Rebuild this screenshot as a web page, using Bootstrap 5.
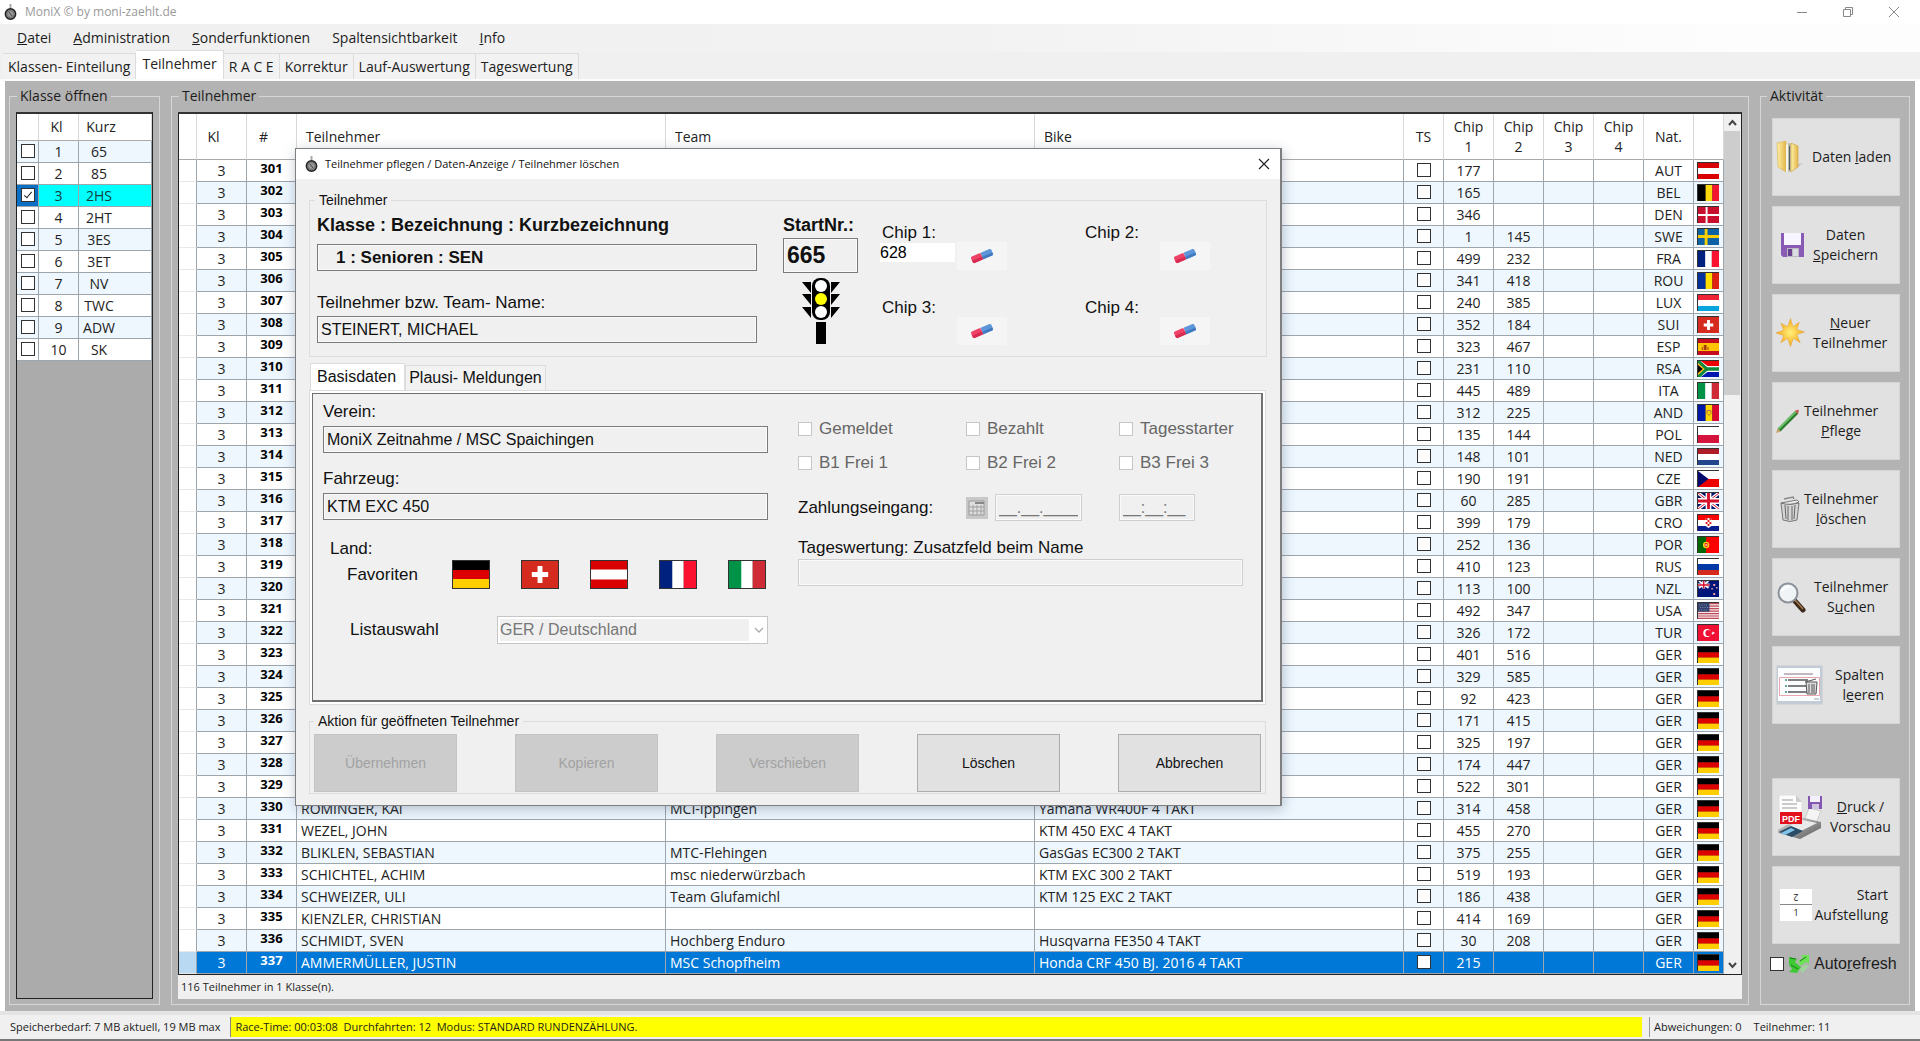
<!DOCTYPE html>
<html lang="de">
<head>
<meta charset="utf-8">
<meta name="viewport" content="width=device-width, initial-scale=1">
<title>MoniX © by moni-zaehlt.de</title>
<link href="https://cdn.jsdelivr.net/npm/bootstrap@5.3.0/dist/css/bootstrap.min.css" rel="stylesheet">
<style>
:root{--ui:"Open Sans","Noto Sans",sans-serif;--form:"Liberation Sans",Arial,sans-serif}
body{font-family:var(--ui);font-size:14px;line-height:20px;color:#1c1c1c;background:#fff}
button,input,select{font-family:inherit}
a{color:inherit;text-decoration:none}
.app{min-height:100vh}
.titlebar{height:24px;color:#999;font-size:12px;padding:0 19px 0 4px}
.capgroup{gap:32px}
.capbtn{border:0;background:none;padding:0;width:14px;height:14px;line-height:0;color:#888}
.menubar{height:28px;background:linear-gradient(90deg,#f0f0f0 0,#f2f2f2 50%,#fdfdfd 90%);padding-left:17px;gap:22px}
.tabstrip{height:29px;background:#f0f0f0;padding-left:3px;border-bottom:2px solid #fbfbfb}
.tabstrip .tabitem{height:26px;padding:0 5px;border:1px solid #dcdcdc;border-left:0;border-bottom:0;background:#f2f2f2;line-height:26px;color:#222}
.tabstrip .tabitem.active{height:29px;background:#fff;line-height:26px;padding:0 6px}
.workarea{background:#b3b3b3;padding:5px 5px 6px 4px;margin:0 5px;gap:11px}
.grp{border:1px solid #d6d6d6;padding:6px 6px 5px;margin:0;min-width:0}
.grp legend{float:none;width:auto;margin:0 0 0 1px;padding:0 3px;font-size:14px;line-height:20px}
.side-l{width:151px;flex:none}.side-r{width:150px;flex:none;padding:12px 9px 5px 11px}
.grp.side-r legend{margin-left:-5px}
.gridbox{border:1px solid #222;border-top:2px solid #333;background:#fff;overflow:hidden}
.classbox{background:#ababab;width:137px}
.dt{border-collapse:separate;border-spacing:0;table-layout:fixed;width:100%;margin:0;font-size:14px;line-height:20px;color:#222}
.dt th,.dt td{border:solid #9da5ad;border-width:0 1px 1px 0;padding:0;height:22px;text-align:center;font-weight:400;white-space:nowrap;overflow:hidden;line-height:20px}
.dt th{border-color:#d9d9d9;border-bottom-color:#a9a9a9;height:46px;background:#fff;white-space:normal}
.dt td{background:#fff}
.dt tr:nth-child(even) td{background:#eef7fe}
.dt td.rh,.dt tr:nth-child(even) td.rh{background:#fff;border-bottom-color:#e8e8e8}
.dt .lft{text-align:left;padding-left:4px}
.dt th.lft{padding-left:9px}
.dt .nr{padding-right:16px}
.dt td.num{font-weight:700;font-size:13px;color:#000;line-height:17px;padding-bottom:4px}
.dt tr.sel td{background:#0078d7!important;color:#fff}
.dt tr.sel td.rh{background:#b9d9f3!important}
.dt.klassen th{height:27px}
.dt.klassen tr:nth-child(odd) td{background:#eef7fe}
.dt.klassen tr:nth-child(even) td{background:#fff}
.dt.klassen tr.act td{background:#0ff;color:#163c3c}
.dt.klassen tr.act td:first-child{background:#0b6fc4}
.dt.klassen td:last-child{padding-right:32px}
.dt.klassen th:last-child{padding-right:28px}
.cb{appearance:none;width:14px;height:14px;border:1px solid #333;background:#fff;margin:0;display:block;position:relative;flex:none}
td .cb{margin:0 auto 2px}
.cb:checked::after{content:"";position:absolute;left:4px;top:1px;width:4px;height:8px;border:solid #222;border-width:0 1px 1px 0;transform:rotate(40deg)}
.flagsm{width:22px;height:17px;display:block;margin:0 0 1px 3px}
.scroll{width:17px;background:#f0f0f0;flex:none}
.scroll button{border:0;background:none;height:17px;width:17px;padding:0;line-height:0}
.scroll .thumb{background:#cdcdcd;height:264px;width:16px}
.infoline{background:#f0f0f0;height:24px;padding:4px 3px;font-size:11px;line-height:16px}
.actbtn{display:flex;align-items:center;width:100%;height:78px;border:1px solid #d4d4d4;background:#e1e1e1;padding:0 3px;margin-bottom:10px;font-size:14px;line-height:20px;color:#1c1c1c;text-align:center}
.actbtn svg{flex:none}
.gapabove{margin-top:44px}
.autoref{margin:10px 0 0 -2px}
.autoref label{font:16px/20px var(--form)}
.status{height:30px;background:#f0f0f0;border-bottom:2px solid #777;border-top:4px solid #e4e4e4;font-size:11px;padding-left:10px;gap:10px;line-height:20px}
.race{background:#ff0;border-left:1px solid #888;padding-left:4px;height:20px}
.counts{width:271px;border-left:1px solid #999;padding-left:4px;margin-left:-3px}
/* dialog window */
.dlg{position:absolute;left:295px;top:148px;width:987px;background:#f0f0f0;border:1px solid #7f7f7f;border-right-width:2px;box-shadow:1px 3px 12px rgba(40,60,90,.3);font-family:var(--form);font-size:17px;line-height:20px;color:#111}
.dlgtitle{height:30px;background:#fff;font:11px/20px var(--ui);padding:0 9px;gap:7px;color:#111}
.dlgbody{padding:11px 13px}
.dlg fieldset{border:1px solid #dcdcdc;margin:0;min-width:0}
.dlg legend{float:none;width:auto;font-size:14px;line-height:20px;margin:0 0 0 -2px;padding:0 4px}
.fs1{padding:0 7px 11px}
.dlg label{display:block}
.fld{display:block;width:100%;height:27px;border:1px solid #7a7a7a;background:#f0f0f0;box-shadow:inset 0 0 0 1px #fafafa;padding:0 3px;font-size:16px;color:#111;border-radius:0}
.fld.dim{border-color:#cfcfcf;color:#777}
.colA{width:440px}.colB{width:75px;margin-left:26px}.colC{margin-left:22px;padding-top:13px;display:grid;grid-template-columns:203px 130px;row-gap:28px;align-content:start}
.gap5{margin-top:5px}
.headlbl{font-size:18px;font-weight:700;white-space:nowrap}
.boldfld{margin-top:9px;padding-left:18px;font-size:17px;font-weight:700}
.namelbl{margin-top:22px}
.namefld{margin-top:3px}
.bignr{height:35px;font-size:23px;font-weight:700;margin-top:3px}
.chip label{padding-left:2px}
.chip input{width:75px;height:19px;border:0;padding:0;background:transparent;font-size:16px}
.chip input.on{background:#fff}
.chip button{width:50px;height:28px;border:0;background:#f5f5f5;padding:0;margin:-1px 0 0 2px;line-height:0}
.ftabs{margin-top:6px;height:27px;margin-left:1px}
.ftabs button{border:1px solid #dcdcdc;border-bottom:0;background:#f2f2f2;padding:0 3px;height:25px;font-size:16px;line-height:22px;color:#111}
.ftabs button.active{background:#fff;height:27px;padding:0 8px 0 6px}
.pageframe{border:1px solid #dcdcdc;background:#fff;padding:2px;margin-right:1px}
.page{border:1px solid #707070;border-right-width:2px;border-bottom-width:2px;background:#f0f0f0;padding:8px 18px 56px 10px;display:grid;grid-template-columns:445px 1fr;column-gap:30px}
.favrow{padding-top:1px}
.selrow{padding-top:27px}
.flags{gap:31px}.flags button{width:38px;height:29px;border:0;padding:0;line-height:0;background:none}
.fav{width:129px;padding-left:24px}
.land{padding:19px 0 0 7px}
.lst{width:174px;padding-left:27px}
.selwrap{position:relative;flex:1;height:28px;border:1px solid #c6c6c6;background:#fff;padding:2px 18px 2px 2px}
.selwrap select{appearance:none;width:100%;height:22px;border:0;background:#f0f0f0;color:#777;font-size:16px;padding:0;opacity:1}
.selwrap svg{position:absolute;right:3px;top:10px}
.opts{display:grid;grid-template-columns:168px 153px 1fr;row-gap:14px;padding-top:17px;color:#666}
.opts .cb{border-color:#c6c6c6}
.opt{display:flex;align-items:center;gap:7px}
.pay{display:grid;grid-template-columns:168px 153px 1fr;padding-top:21px;align-items:center}
.paydate{width:87px;margin-left:7px}.paytime{width:76px}
.zuslbl{margin:17px 0 1px}
.dlg .fs2{padding:3px 4px 1px;margin-top:6px;margin-right:1px}
.dlg .fs2 legend{margin-left:0}
.cmd{width:143px;height:58px;border:1px solid #adadad;background:#e1e1e1;font-size:14px;color:#111;padding:0}
.cmd:disabled{background:#ccc;border-color:#c4c4c4;color:#a2a2a2}
</style>
<script src="https://cdn.jsdelivr.net/npm/bootstrap@5.3.0/dist/js/bootstrap.bundle.min.js"></script>
</head>
<body>
<svg width="0" height="0" class="position-absolute" aria-hidden="true">
<defs>
<symbol id="AUT" viewBox="0 0 22 16" preserveAspectRatio="none"><path fill="#d80000" d="M0 0h22v16H0z"/><path fill="#fff" d="M0 5h22v6H0z"/></symbol>
<symbol id="BEL" viewBox="0 0 22 16" preserveAspectRatio="none"><path d="M0 0h8v16H0z"/><path fill="#ffd90c" d="M8 0h7v16H8z"/><path fill="#f31830" d="M15 0h7v16h-7z"/></symbol>
<symbol id="DEN" viewBox="0 0 22 16" preserveAspectRatio="none"><path fill="#c8102e" d="M0 0h22v16H0z"/><path fill="#fff" d="M8 0h2v16H8zM0 7h22v2H0z"/></symbol>
<symbol id="SWE" viewBox="0 0 22 16" preserveAspectRatio="none"><path fill="#0b62a4" d="M0 0h22v16H0z"/><path fill="#f7cf00" d="M7 0h3v16H7zM0 6h22v3H0z"/></symbol>
<symbol id="FRA" viewBox="0 0 22 16" preserveAspectRatio="none"><path fill="#00217e" d="M0 0h8v16H0z"/><path fill="#fff" d="M7.500 0h7v16h-7z"/><path fill="#fb1230" d="M14.500 0H22v16h-7.500z"/></symbol>
<symbol id="ROU" viewBox="0 0 22 16" preserveAspectRatio="none"><path fill="#00319c" d="M0 0h8v16H0z"/><path fill="#ffde00" d="M8 0h7v16H8z"/><path fill="#de2110" d="M15 0h7v16h-7z"/></symbol>
<symbol id="LUX" viewBox="0 0 22 16" preserveAspectRatio="none"><path fill="#fff" d="M0 0h22v16H0z"/><path fill="#ee2436" d="M0 0h22v5H0z"/><path fill="#08a4de" d="M0 11h22v5H0z"/></symbol>
<symbol id="SUI" viewBox="0 0 22 16" preserveAspectRatio="none"><path fill="#d52b1e" d="M0 0h22v16H0z"/><path fill="#fff" d="M9.500 3h3v3.500H16v3h-3.500V13h-3V9.500H6v-3h3.500z"/></symbol>
<symbol id="ESP" viewBox="0 0 22 16" preserveAspectRatio="none"><path fill="#c60b1e" d="M0 0h22v16H0z"/><path fill="#ffc400" d="M0 4h22v8H0z"/><path fill="#a33a10" d="M4 8h1v3H4zM6 6h3v5H6zM10 8h1v3h-1z"/></symbol>
<symbol id="RSA" viewBox="0 0 22 16" preserveAspectRatio="none"><path fill="#fff" d="M0 0h22v16H0z"/><path fill="#e00" d="M3 0h19v5H10z"/><path fill="#0018b0" d="M3 16h19v-5H10z"/><path fill="none" stroke="#108a3c" stroke-width="3.500" d="M0 0l9 8-9 8M9 8h13"/><path fill="#fcb514" d="M0 2l7 6-7 6z"/><path d="M0 4l5 4-5 4z"/></symbol>
<symbol id="ITA" viewBox="0 0 22 16" preserveAspectRatio="none"><path fill="#009246" d="M0 0h8v16H0z"/><path fill="#fff" d="M7.500 0h7v16h-7z"/><path fill="#ce2b37" d="M14.500 0H22v16h-7.500z"/></symbol>
<symbol id="AND" viewBox="0 0 22 16" preserveAspectRatio="none"><path fill="#0018a8" d="M0 0h8v16H0z"/><path fill="#ffd500" d="M8 0h7v16H8z"/><path fill="#d8082e" d="M15 0h7v16h-7z"/><path fill="none" stroke="#b2713b" d="M9.500 5.500h4v3l-2 2-2-2z"/></symbol>
<symbol id="POL" viewBox="0 0 22 16" preserveAspectRatio="none"><path fill="#fff" d="M0 0h22v16H0z"/><path fill="#d4143c" d="M0 8h22v8H0z"/></symbol>
<symbol id="NED" viewBox="0 0 22 16" preserveAspectRatio="none"><path fill="#fff" d="M0 0h22v16H0z"/><path fill="#ae1c28" d="M0 0h22v5H0z"/><path fill="#21468b" d="M0 11h22v5H0z"/></symbol>
<symbol id="CZE" viewBox="0 0 22 16" preserveAspectRatio="none"><path fill="#fff" d="M0 0h22v16H0z"/><path fill="#e00" d="M0 8h22v8H0z"/><path fill="#00096b" d="M0 0l11 8-11 8z"/></symbol>
<symbol id="GBR" viewBox="0 0 22 16" preserveAspectRatio="none"><path fill="#00136b" d="M0 0h22v16H0z"/><path stroke="#fff" stroke-width="3.400" d="M0 0l22 16M22 0L0 16"/><path stroke="#d4102c" d="M0 0l22 16M22 0L0 16"/><path fill="#fff" d="M8 0h6v16H8zM0 5h22v6H0z"/><path fill="#d4102c" d="M9.500 0h3v16h-3zM0 6.500h22v3H0z"/></symbol>
<symbol id="CRO" viewBox="0 0 22 16" preserveAspectRatio="none"><path fill="#fff" d="M0 0h22v16H0z"/><path fill="#f00" d="M0 0h22v5H0z"/><path fill="#0a1d8f" d="M0 11h22v5H0z"/><path fill="#fff" d="M8 3h6v8l-3 2-3-2z"/><path fill="#e02020" d="M8 3h2v2H8zM12 3h2v2h-2zM10 5h2v2h-2zM8 7h2v2H8zM12 7h2v2h-2zM10 9h2v2h-2z"/></symbol>
<symbol id="POR" viewBox="0 0 22 16" preserveAspectRatio="none"><path fill="#f00" d="M0 0h22v16H0z"/><path fill="#060" d="M0 0h8.500v16H0z"/><circle cx="8.500" cy="8" r="3.300" fill="#f7d417"/><path fill="#e22" d="M7 6h3v3l-1.500 1.500L7 9z"/><path fill="#fff" d="M8 7h1v2H8z"/></symbol>
<symbol id="RUS" viewBox="0 0 22 16" preserveAspectRatio="none"><path fill="#fff" d="M0 0h22v16H0z"/><path fill="#0039a6" d="M0 5h22v6H0z"/><path fill="#d52b1e" d="M0 11h22v5H0z"/></symbol>
<symbol id="NZL" viewBox="0 0 22 16" preserveAspectRatio="none"><path fill="#00157a" d="M0 0h22v16H0z"/><path stroke="#fff" stroke-width="1.600" d="M1 0l10 7M11 0L1 7"/><path fill="#fff" d="M4.500 0h3v7.500h-3zM0 2.500h12v3H0z"/><path fill="#d4102c" d="M5.300 0h1.500v7.500H5.300zM0 3.200h12v1.500H0z"/><path fill="#f3a3a3" d="M16 3h2v2h-2zM14 7h1.500v1.500H14zM19 6h1.500v1.500H19zM16 12h2v2h-2z"/></symbol>
<symbol id="USA" viewBox="0 0 22 16" preserveAspectRatio="none"><path fill="#f3e9ea" d="M0 0h22v16H0z"/><path stroke="#c04a58" stroke-width="1.200" d="M0 .6h22M0 3.100h22M0 5.600h22M0 8.100h22M0 10.600h22M0 13h22M0 15.400h22"/><path fill="#31426f" d="M0 0h12v8.700H0z"/><path stroke="#8793ad" stroke-dasharray="1 1.500" d="M1 2h10M2 4.500h9M1 7h10"/></symbol>
<symbol id="TUR" viewBox="0 0 22 16" preserveAspectRatio="none"><path fill="#f01034" d="M0 0h22v16H0z"/><circle cx="9.500" cy="8" r="4" fill="#fff"/><circle cx="10.800" cy="8" r="3.100" fill="#f01034"/><path fill="#fff" d="M14 8l1.200-.4.300-1.300.8 1 1.200-.2-.7 1 .5 1-1.200-.3-.9.900z"/></symbol>
<symbol id="GER" viewBox="0 0 22 16" preserveAspectRatio="none"><path d="M0 0h22v5.500H0z"/><path fill="#dc0000" d="M0 5.300h22v5.500H0z"/><path fill="#ffce00" d="M0 10.600h22V16H0z"/></symbol>
<symbol id="watch" viewBox="0 0 13 18"><path d="M6.500 1v4" stroke="#aaa" stroke-width="2"/><circle cx="6.500" cy="11" r="5.200" fill="#777" stroke="#222" stroke-width="1.400"/><circle cx="6.500" cy="11" r="2.800" fill="#999"/><path d="M5 9l3 4" stroke="#444"/></symbol>
<symbol id="eraser" viewBox="0 0 24 18"><g transform="rotate(-23 12 9)"><rect x="1" y="5.500" width="11" height="7" rx="1.500" fill="#ee4266"/><path d="M1 9.500h11v3H2z" fill="#d82b52"/><path d="M12 5.500h9.500q1.500 0 1.500 1.500v4q0 1.500-1.500 1.500H12z" fill="#5d97da"/><path d="M12 9.800h11q0 2.700-1.500 2.700H12z" fill="#4179c0"/></g></symbol>
<linearGradient id="gold" x1="0" x2="1"><stop stop-color="#fff0a8"/><stop offset="1" stop-color="#e3b64a"/></linearGradient>
<radialGradient id="sun"><stop stop-color="#fff27a"/><stop offset="1" stop-color="#f6a51c"/></radialGradient>
<linearGradient id="prn" x1="0" y1="0" x2="1" y2="1"><stop stop-color="#ddd"/><stop offset="1" stop-color="#555"/></linearGradient>
</defs>
</svg>

<div class="app d-flex flex-column">
  <header class="titlebar d-flex align-items-center">
    <svg width="13" height="18"><use href="#watch"/></svg>
    <span class="ms-2">MoniX © by moni-zaehlt.de</span>
    <div class="capgroup ms-auto d-flex">
      <button class="capbtn" aria-label="Minimieren"><svg width="12" height="12"><path d="M1 6.500h10" stroke="currentColor"/></svg></button>
      <button class="capbtn" aria-label="Wiederherstellen"><svg width="12" height="12" fill="none" stroke="currentColor"><path d="M1.500 3.500h7v7h-7zM3.500 3V1.500h7v7H9"/></svg></button>
      <button class="capbtn" aria-label="Schließen"><svg width="12" height="12"><path d="M1 1l10 10M11 1L1 11" stroke="currentColor"/></svg></button>
    </div>
  </header>
  <nav class="menubar d-flex align-items-center">
    <a href="#"><u>D</u>atei</a><a href="#"><u>A</u>dministration</a><a href="#"><u>S</u>onderfunktionen</a><a href="#">Spaltensichtbarkeit</a><a href="#"><u>I</u>nfo</a>
  </nav>
  <nav class="tabstrip d-flex align-items-end">
    <a class="tabitem" href="#">Klassen- Einteilung</a><a class="tabitem active" href="#">Teilnehmer</a><a class="tabitem" href="#">R A C E</a><a class="tabitem" href="#">Korrektur</a><a class="tabitem" href="#">Lauf-Auswertung</a><a class="tabitem" href="#">Tageswertung</a>
  </nav>

  <main class="workarea d-flex flex-grow-1">
    <fieldset class="grp side-l d-flex flex-column">
      <legend>Klasse öffnen</legend>
      <div class="gridbox classbox flex-grow-1">
        <table class="dt klassen">
          <colgroup><col style="width:22px"><col style="width:40px"><col></colgroup>
          <thead><tr><th></th><th class="pe-1">Kl</th><th>Kurz</th></tr></thead>
          <tbody id="klassen"></tbody>
        </table>
      </div>
    </fieldset>

    <fieldset class="grp flex-grow-1 d-flex flex-column">
      <legend>Teilnehmer</legend>
      <div class="gridbox d-flex flex-grow-1">
        <div class="flex-grow-1">
          <table class="dt">
            <colgroup><col style="width:18px"><col style="width:50px"><col style="width:50px"><col><col><col><col style="width:40px"><col style="width:50px"><col style="width:50px"><col style="width:50px"><col style="width:50px"><col style="width:50px"><col style="width:30px"></colgroup>
            <thead><tr><th></th><th class="nr">Kl</th><th class="nr">#</th><th class="lft">Teilnehmer</th><th class="lft">Team</th><th class="lft">Bike</th><th>TS</th><th>Chip<br>1</th><th>Chip<br>2</th><th>Chip<br>3</th><th>Chip<br>4</th><th>Nat.</th><th></th></tr></thead>
            <tbody id="fahrer"></tbody>
          </table>
        </div>
        <div class="scroll d-flex flex-column">
          <button aria-label="Nach oben"><svg width="9" height="7" fill="none" stroke="#444" stroke-width="2"><path d="M1 6l3.500-4L8 6"/></svg></button>
          <div class="thumb flex-shrink-0"></div>
          <button class="mt-auto" aria-label="Nach unten"><svg width="9" height="7" fill="none" stroke="#444" stroke-width="2"><path d="M1 1l3.500 4L8 1"/></svg></button>
        </div>
      </div>
      <div class="infoline">116 Teilnehmer in 1 Klasse(n).</div>
    </fieldset>

    <fieldset class="grp side-r d-flex flex-column">
      <legend>Aktivität</legend>
      <button class="actbtn"><svg width="28" height="36" viewBox="0 0 28 36"><path d="M18 31l9-7-7 2z" fill="#aaa" opacity=".6"/><path d="M1 4l9-2v31L2 28z" fill="url(#gold)" stroke="#d9b75c" stroke-width=".7"/><path d="M10 6l3-1v28l-3 0z" fill="#f5f5ef"/><path d="M12 4l4 1v27l-4 1z" fill="#b7b9a0"/><path d="M13.500 7v24" stroke="#57606a"/><path d="M15 4l7 3v21l-7 5z" fill="url(#gold)" stroke="#d0a848" stroke-width=".7"/></svg><span class="ms-2 text-nowrap">Daten <u>l</u>aden</span></button>
      <button class="actbtn"><svg class="ms-1" width="25" height="26" viewBox="0 0 25 26"><path d="M1 1h23v24H3l-2-2z" fill="#8a5bb5"/><path d="M4 1h17v12H4z" fill="#f7f5ff"/><path d="M7 16h12v9H7z" fill="#b9b9c4"/><path d="M8 17h4v7H8z" fill="#6b418f"/><path d="M13 17h5v7h-5z" fill="#dcdce4"/></svg><span class="ms-2">Daten<br><u>S</u>peichern</span></button>
      <button class="actbtn"><svg width="29" height="30" viewBox="0 0 30 30"><path fill="url(#sun)" stroke="#e5a93c" stroke-width=".6" d="M15 0l2.500 8.500L24 4l-2.500 7.500 8 2.500-8 2.500L25 25l-7-4.500L15 29l-3-8.500L5 25l3-7.500L0 15l8-3L5 5l7 3.500z"/></svg><span class="ms-2"><u>N</u>euer<br>Teilnehmer</span></button>
      <button class="actbtn"><svg width="24" height="24" viewBox="0 0 24 24"><path d="M3 21L21 3" stroke="#2a7a2a" stroke-width="4"/><path d="M2.500 20L20 2.500" stroke="#6cc16a" stroke-width="1.800"/><path d="M19 2l3-1.500L23 2l-1.500 3z" fill="#c55"/><path d="M0 24l1.500-4.500 3 3z" fill="#caa36a"/></svg><span class="ms-1">Teilnehmer<br><u>P</u>flege</span></button>
      <button class="actbtn"><svg class="ms-1" width="20" height="26" viewBox="0 0 20 26"><path d="M1 7q9 3 18 0l-2 17q-7 3-14 0z" fill="#d5d5d5" stroke="#777"/><path d="M5 9l1 14M8 10v14M12 10v14M15 9l-1 14" stroke="#666"/><path d="M1 7L17 4l2 2q-9 4-18 1z" fill="#eee" stroke="#777"/><path d="M4 3l9-2 1 2" fill="none" stroke="#888" stroke-width="1.500"/></svg><span class="ms-1">Teilnehmer<br><u>l</u>öschen</span></button>
      <button class="actbtn"><svg width="30" height="32" viewBox="0 0 30 32"><path d="M18 19l9 10" stroke="#3a2a1c" stroke-width="5" stroke-linecap="round"/><path d="M19 19l8 9" stroke="#a2774a" stroke-width="1.600"/><circle cx="12" cy="12" r="9.500" fill="#f1f4f6" stroke="#8b9299" stroke-width="2"/><path d="M6 10q2-5 8-4" fill="none" stroke="#fff" stroke-width="2"/></svg><span class="ms-2">Teilnehmer<br>S<u>u</u>chen</span></button>
      <button class="actbtn"><svg width="47" height="40" viewBox="0 0 47 40"><path d="M.5.500h46v39H.5z" fill="#c3ccd4"/><path d="M2 3h42v33H2z" fill="#fbfcfd"/><path d="M8 9h29" stroke="#8a7482"/><path d="M3.500 12.500h40v18h-40z" fill="none" stroke="#e7a5ae"/><path d="M12 15h20M12 21h18M12 27h20" stroke="#555" stroke-width="1.500"/><path d="M9 14h2v2H9zM9 20h2v2H9zM9 26h2v2H9z" fill="#6a9"/><path d="M30 17h11l-1 12h-9z" fill="#ddd" stroke="#555"/><path d="M33 19v9M36 19v9M38 19v9M29 17l11-3" stroke="#555"/><path d="M38 34h5" stroke="#9ab"/></svg><span class="ms-auto me-2 pe-1 text-end">Spalten<br>l<u>e</u>eren</span></button>
      <button class="actbtn gapabove"><svg width="46" height="46" viewBox="0 0 46 46"><path d="M33 14l12 3-5 12-12-2z" fill="#f4f4f4" stroke="#ccc"/><path d="M2 36l22-13 21 5v6L24 45 2 39z" fill="url(#prn)"/><path d="M22 25l19 4-16 8-12-4z" fill="#e8eaec"/><path d="M3 38l12-6 12 5-11 6z" fill="#2b4c66"/><path d="M5 39l10-5 4 2-10 5z" fill="#7fc4e8"/><path d="M3 1h17l6 7v22H3z" fill="#fcfcfc" stroke="#ddd"/><path d="M20 1v7h6z" fill="#ccc"/><path d="M6 6h11M6 10h15M6 14h15" stroke="#999"/><path d="M4 18h22v12H4z" fill="#e3101e"/><path d="M32 2h14v13H32z" fill="#8257b0"/><path d="M34 2h10v6H34z" fill="#f4f0fb"/><path d="M36 10h7v5h-7z" fill="#cfc4dd"/><text x="15" y="27.500" text-anchor="middle" font-family="Liberation Sans, sans-serif" font-size="9" font-weight="700" fill="#fff">PDF</text></svg><span class="ms-2"><u>D</u>ruck /<br>Vorschau</span></button>
      <button class="actbtn mb-0"><svg class="ms-1" width="32" height="32" viewBox="0 0 32 32" font-family="Open Sans, sans-serif" font-size="9" fill="#222" text-anchor="middle"><path d="M0 0h32v32H0z" fill="#fff"/><path d="M0 15.500h32" stroke="#888"/><text x="16" y="27">1</text><text transform="rotate(180 16 8.500)" x="16" y="12">2</text></svg><span class="ms-auto me-1 pe-1 text-end text-nowrap">Start<br>Aufstellung</span></button>
      <div class="autoref d-flex align-items-center"><input class="cb" type="checkbox" id="auto"><svg class="mx-1" width="22" height="20" viewBox="0 0 22 20"><path d="M1 3l8 2-2 3 6 5-4 6-8-1 3-3-3-4z" fill="#3fca35"/><path d="M21 1v9l-3-2-5 4-3-5 5-3-2-3z" fill="#6be255"/><path d="M21 12l-7 7-2-4 5-4z" fill="#9fd79b"/><path d="M2 4l6 1M3 11l7 4M12 7l6-4" stroke="#157a17" fill="none"/></svg><label for="auto">Auto<u>r</u>efresh</label></div>
    </fieldset>
  </main>

  <footer class="status d-flex align-items-center">
    <span>Speicherbedarf: 7 MB aktuell, 19 MB max</span>
    <div class="race flex-grow-1">Race-Time: 00:03:08&nbsp; Durchfahrten: 12&nbsp; Modus: STANDARD RUNDENZÄHLUNG.</div>
    <div class="counts d-flex">Abweichungen: 0<span class="ms-2 ps-1">Teilnehmer: 11</span></div>
  </footer>
</div>

<section class="dlg" role="dialog" aria-labelledby="dlgt">
  <div class="dlgtitle d-flex align-items-center"><svg width="13" height="18"><use href="#watch"/></svg><span id="dlgt">Teilnehmer pflegen / Daten-Anzeige / Teilnehmer löschen</span><button class="capbtn ms-auto text-dark" aria-label="Schließen"><svg width="12" height="12"><path d="M1 1l10 10M11 1L1 11" stroke="currentColor" stroke-width="1.200"/></svg></button></div>
  <div class="dlgbody">
    <fieldset class="fs1 d-flex">
      <legend>Teilnehmer</legend>
      <div class="d-flex w-100">
        <div class="colA gap5">
          <label class="headlbl" for="kl">Klasse : Bezeichnung : Kurzbezeichnung</label>
          <input class="fld boldfld" id="kl" value="1 : Senioren : SEN" readonly>
          <label class="namelbl" for="nm">Teilnehmer bzw. Team- Name:</label>
          <input class="fld namefld" id="nm" value="STEINERT, MICHAEL" readonly>
        </div>
        <div class="colB gap5">
          <label class="headlbl" for="sn">StartNr.:</label>
          <input class="fld bignr" id="sn" value="665" readonly>
          <svg class="d-block mx-auto gap5" width="40" height="66" viewBox="0 0 40 66"><path d="M15 44h10v22H15z"/><path d="M1 4h9v11zM1 16h9v11zM1 29h9v11zM39 4h-9v11zM39 16h-9v11zM39 29h-9v11z"/><rect x="11" y="0" width="18" height="42" rx="8"/><circle cx="20" cy="8" r="6" fill="#fff"/><circle cx="20" cy="21" r="6" fill="#ff0"/><circle cx="20" cy="34" r="6" fill="#fff"/></svg>
        </div>
        <div class="colC">
          <div class="chip"><label for="c1">Chip 1:</label><div class="d-flex"><input class="on" id="c1" value="628"><button aria-label="Chip 1 löschen"><svg width="24" height="18"><use href="#eraser"/></svg></button></div></div>
          <div class="chip"><label for="c2">Chip 2:</label><div class="d-flex"><input id="c2"><button aria-label="Chip 2 löschen"><svg width="24" height="18"><use href="#eraser"/></svg></button></div></div>
          <div class="chip"><label for="c3">Chip 3:</label><div class="d-flex"><input id="c3"><button aria-label="Chip 3 löschen"><svg width="24" height="18"><use href="#eraser"/></svg></button></div></div>
          <div class="chip"><label for="c4">Chip 4:</label><div class="d-flex"><input id="c4"><button aria-label="Chip 4 löschen"><svg width="24" height="18"><use href="#eraser"/></svg></button></div></div>
        </div>
      </div>
    </fieldset>

    <div class="ftabs d-flex align-items-end"><button class="active">Basisdaten</button><button>Plausi- Meldungen</button></div>
    <div class="pageframe"><div class="page">
      <div>
        <label for="ve">Verein:</label>
        <input class="fld mt-1" id="ve" value="MoniX Zeitnahme / MSC Spaichingen" readonly>
        <label class="mt-3" for="fz">Fahrzeug:</label>
        <input class="fld mt-1" id="fz" value="KTM EXC 450" readonly>
        <div class="land">Land:</div>
        <div class="d-flex align-items-center favrow"><span class="fav">Favoriten</span><div class="d-flex flags" id="favs"></div></div>
        <div class="d-flex align-items-center selrow"><label class="lst" for="li">Listauswahl</label><div class="selwrap"><select id="li" disabled><option>GER / Deutschland</option></select><svg width="10" height="7" fill="none" stroke="#aaa" stroke-width="1.300"><path d="M1 1l4 4 4-4"/></svg></div></div>
      </div>
      <div>
        <div class="opts" id="opts"></div>
        <div class="pay"><label for="zd">Zahlungseingang:</label><div class="d-flex align-items-center"><svg width="22" height="22" viewBox="0 0 22 22"><path d="M0 0h22v22H0z" fill="#c8c8c8"/><path d="M3 4h15v14H3z" fill="#dedede" stroke="#999"/><path d="M9 5h9v2H9z" fill="#888"/><path d="M3 10h15M3 14h15M7 8v10M11 8v10M15 8v10" stroke="#a0a0a0"/></svg><input class="fld dim paydate" id="zd" value="__.__.____" disabled></div><input class="fld dim paytime" aria-label="Uhrzeit" value="__:__:__" disabled></div>
        <label class="zuslbl" for="zf">Tageswertung: Zusatzfeld beim Name</label>
        <input class="fld dim" id="zf" disabled>
      </div>
    </div></div>

    <fieldset class="fs2">
      <legend>Aktion für geöffneten Teilnehmer</legend>
      <div class="d-flex justify-content-between"><button class="cmd" disabled>Übernehmen</button><button class="cmd" disabled>Kopieren</button><button class="cmd" disabled>Verschieben</button><button class="cmd">Löschen</button><button class="cmd">Abbrechen</button></div>
    </fieldset>
  </div>
</section>
<script>
const kl=[['1','65'],['2','85'],['3','2HS'],['4','2HT'],['5','3ES'],['6','3ET'],['7','NV'],['8','TWC'],['9','ADW'],['10','SK']];
document.getElementById('klassen').innerHTML=kl.map(([n,k])=>`<tr class="${n=='3'?'act':''}"><td><input class="cb" type="checkbox" aria-label="Klasse ${k}" ${n=='3'?'checked':''}></td><td>${n}</td><td>${k}</td></tr>`).join('');
const nat='AUT BEL DEN SWE FRA ROU LUX SUI ESP RSA ITA AND POL NED CZE GBR CRO POR RUS NZL USA TUR'.split(' ');
const c1=[177,165,346,1,499,341,240,352,323,231,445,312,135,148,190,60,399,252,410,113,492,326,401,329,92,171,325,174,522,314,455,375,519,186,414,30,215];
const c2=['','','',145,232,418,385,184,467,110,489,225,144,101,191,285,179,136,123,100,347,172,516,585,423,415,197,447,301,458,270,255,193,438,169,208,''];
const who={330:['ROMINGER, KAI','MCI-Ippingen','Yamaha WR400F 4 TAKT'],331:['WEZEL, JOHN','','KTM 450 EXC 4 TAKT'],332:['BLIKLEN, SEBASTIAN','MTC-Flehingen','GasGas EC300 2 TAKT'],333:['SCHICHTEL, ACHIM','msc niederwürzbach','KTM EXC 300 2 TAKT'],334:['SCHWEIZER, ULI','Team Glufamichl','KTM 125 EXC 2 TAKT'],335:['KIENZLER, CHRISTIAN','',''],336:['SCHMIDT, SVEN','Hochberg Enduro','Husqvarna FE350 4 TAKT'],337:['AMMERMÜLLER, JUSTIN','MSC Schopfheim','Honda CRF 450 BJ. 2016 4 TAKT']};
document.getElementById('fahrer').innerHTML=c1.map((c,i)=>{const n=301+i,w=who[n]||['','',''],f=nat[i]||'GER';
return `<tr class="${n==337?'sel':''}"><td class="rh"></td><td>3</td><td class="num">${n}</td><td class="lft">${w[0]}</td><td class="lft">${w[1]}</td><td class="lft">${w[2]}</td><td><input class="cb" type="checkbox" aria-label="TS ${n}"></td><td>${c}</td><td>${c2[i]}</td><td></td><td></td><td>${f}</td><td>${flag(f,'flagsm')}</td></tr>`}).join('');
function flag(f,c){const h=c?[22,17]:[38,29];return `<svg class="${c}" width="${h[0]}" height="${h[1]}"><rect width="${h[0]}" height="${h[1]}" fill="#333"/><use href="#${f}" x="1" y="1" width="${h[0]-(c?1:2)}" height="${h[1]-(c?1:2)}"/></svg>`}
document.getElementById('favs').innerHTML=['GER','SUI','AUT','FRA','ITA'].map(f=>`<button aria-label="${f}">${flag(f,'')}</button>`).join('');
document.getElementById('opts').innerHTML=['Gemeldet','Bezahlt','Tagesstarter','B1 Frei 1','B2 Frei 2','B3 Frei 3'].map((t,i)=>`<div class="opt"><input class="cb" type="checkbox" id="o${i}" disabled><label for="o${i}">${t}</label></div>`).join('');
</script>
</body>
</html>
